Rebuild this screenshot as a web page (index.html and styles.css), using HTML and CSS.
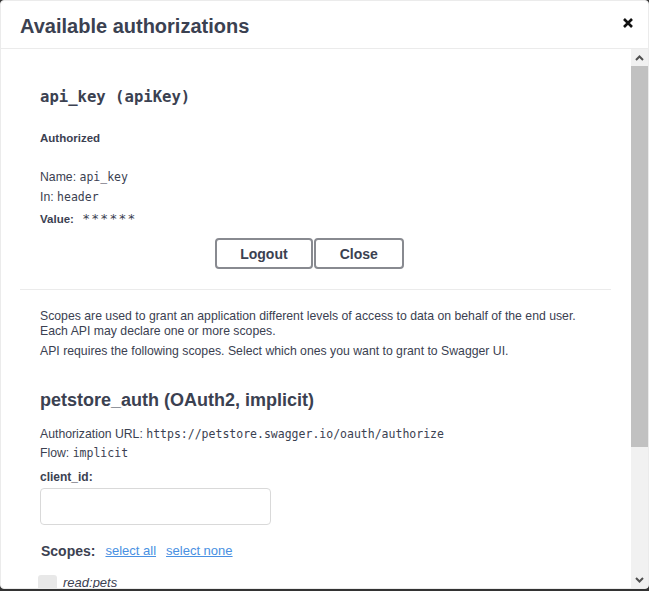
FILE: index.html
```html
<!DOCTYPE html>
<html>
<head>
<meta charset="utf-8">
<link rel="stylesheet" href="styles.css">
</head>
<body>
<div class="modal">
  <div class="modal-header">
    <h3 class="modal-title">Available authorizations</h3>
    <button class="close-btn" aria-label="Close">
      <svg width="10" height="10" viewBox="0 0 10 10"><path d="M1 1 L9 9 M9 1 L1 9" stroke="#111" stroke-width="2.6" stroke-linecap="butt"/></svg>
    </button>
  </div>
  <div class="modal-body">
    <div class="modal-content">
      <div class="auth-container first">
        <h4 class="mono-title">api_key (apiKey)</h4>
        <h6 class="status">Authorized</h6>
        <div class="row gap-top">Name: <code>api_key</code></div>
        <div class="row">In: <code>header</code></div>
        <div class="row value"><label>Value:</label> <code class="stars">******</code></div>
        <div class="btn-wrapper">
          <button class="btn logout">Logout</button>
          <button class="btn close">Close</button>
        </div>
      </div>
      <div class="auth-container second">
        <p class="desc">Scopes are used to grant an application different levels of access to data on behalf of the end user.<br>Each API may declare one or more scopes.</p>
        <p class="desc req">API requires the following scopes. Select which ones you want to grant to Swagger UI.</p>
        <h4 class="sans-title">petstore_auth (OAuth2, implicit)</h4>
        <div class="row url">Authorization URL: <code>https://petstore.swagger.io/oauth/authorize</code></div>
        <div class="row flow">Flow: <code>implicit</code></div>
        <label class="field-label">client_id:</label>
        <input class="text-input" type="text">
        <div class="scopes-row">
          <h2 class="scopes-title">Scopes:</h2>
          <a class="link" href="#">select all</a>
          <a class="link" href="#">select none</a>
        </div>
        <div class="checkbox-row">
          <span class="box"></span>
          <span class="scope-name">read:pets</span>
        </div>
      </div>
    </div>
    <div class="scrollbar">
      <div class="sb-btn">
        <svg width="9" height="6" viewBox="0 0 9 6"><path d="M1 5 L4.5 1.5 L8 5" fill="none" stroke="#505050" stroke-width="2"/></svg>
      </div>
      <div class="sb-thumb"></div>
      <div class="sb-track"></div>
      <div class="sb-btn">
        <svg width="9" height="6" viewBox="0 0 9 6"><path d="M1 1 L4.5 4.5 L8 1" fill="none" stroke="#505050" stroke-width="2"/></svg>
      </div>
    </div>
  </div>
</div>
</body>
</html>
```

FILE: styles.css
```css
html, body {
  margin: 0;
  padding: 0;
}
body {
  background: #333333;
  width: 649px;
  height: 591px;
  overflow: hidden;
  font-family: "Liberation Sans", Arial, sans-serif;
  color: #3b4151;
}
.modal {
  box-sizing: border-box;
  width: 649px;
  height: 589px;
  background: #fff;
  border: 1px solid #ebebeb;
  border-radius: 4px;
  display: flex;
  flex-direction: column;
  overflow: hidden;
}
.modal-header {
  display: flex;
  align-items: center;
  height: 47px;
  border-bottom: 1px solid #ebebeb;
  flex: none;
}
.modal-title {
  flex: 1;
  margin: 0;
  padding: 0 19px;
  font-family: "Liberation Sans", Arial, sans-serif;
  font-size: 20px;
  font-weight: 700;
  color: #3b4151;
  line-height: 24px;
  position: relative;
  top: 1px;
}
.close-btn {
  border: 0;
  background: none;
  padding: 0;
  margin: 0 15px 0 0;
  width: 10px;
  height: 10px;
  display: flex;
  position: relative;
  top: -2px;
}
.modal-body {
  flex: 1;
  display: flex;
  min-height: 0;
}
.modal-content {
  flex: 1;
  overflow: hidden;
  padding: 20px 20px 0 19px;
}
.auth-container {
  padding: 10px 20px;
  border-bottom: 1px solid #ebebeb;
  margin: 0 0 10px;
}
.auth-container.first {
  padding-bottom: 20px;
}
.auth-container.second {
  border-bottom: 0;
  padding-top: 9px;
}
.mono-title {
  margin: 6px 0 0;
  font-family: "DejaVu Sans Mono", "Liberation Mono", monospace;
  font-size: 15.6px;
  font-weight: 700;
  line-height: 24px;
  color: #3b4151;
}
.status {
  margin: 21px 0 0;
  font-size: 11.5px;
  font-weight: 700;
  line-height: 16px;
}
.row {
  font-size: 12.25px;
  line-height: 20px;
}
.gap-top {
  margin-top: 21px;
}
code {
  font-family: "DejaVu Sans Mono", "Liberation Mono", monospace;
  font-size: 11.5px;
}
.row.value {
  margin-top: 2px;
}
.row.value label {
  font-weight: 700;
  font-size: 11.5px;
}
.stars {
  font-size: 13px;
  letter-spacing: 1.2px;
  margin-left: 5px;
}
.btn-wrapper {
  display: flex;
  justify-content: center;
  gap: 1px;
  margin-top: 9px;
  padding-right: 12px;
}
.btn {
  box-sizing: border-box;
  height: 31px;
  padding: 0 23px;
  border: 2px solid #888a90;
  border-radius: 4px;
  background: #fff;
  font-family: "Liberation Sans", Arial, sans-serif;
  font-size: 14px;
  font-weight: 700;
  color: #3b4151;
}
.btn.close {
  padding: 0 24px;
}
.desc {
  margin: 0;
  font-size: 12.25px;
  line-height: 15px;
}
.desc.req {
  margin-top: 5px;
}
.sans-title {
  margin: 29px 0 0;
  font-size: 18px;
  font-weight: 700;
  line-height: 24px;
}
.row.url {
  margin-top: 13px;
  line-height: 19px;
}
.row.flow {
  line-height: 19px;
}
.field-label {
  display: block;
  margin-top: 5px;
  font-size: 12px;
  font-weight: 700;
  line-height: 18px;
}
.text-input {
  display: block;
  box-sizing: border-box;
  width: 231px;
  height: 37px;
  margin: 2px 0 0;
  border: 1px solid #d9d9d9;
  border-radius: 4px;
  background: #fff;
  padding: 8px 10px;
}
.scopes-row {
  display: flex;
  align-items: center;
  gap: 10px;
  margin-top: 16px;
  height: 20px;
  padding-left: 1px;
}
.scopes-title {
  margin: 0;
  font-size: 14px;
  font-weight: 700;
  line-height: 20px;
}
.link {
  color: #4990e2;
  font-size: 13px;
  line-height: 20px;
  text-decoration: underline;
}
.checkbox-row {
  display: flex;
  align-items: center;
  gap: 6px;
  margin-top: 14px;
  margin-left: -2px;
}
.box {
  width: 19px;
  height: 16px;
  background: #e8e8e8;
  border-radius: 3px;
}
.scope-name {
  font-size: 13px;
  font-style: italic;
  color: #3b4151;
  line-height: 16px;
}
.scrollbar {
  width: 17px;
  flex: none;
  display: flex;
  flex-direction: column;
  background: #f1f1f1;
}
.sb-btn {
  height: 17px;
  display: flex;
  align-items: center;
  justify-content: center;
  flex: none;
}
.sb-thumb {
  height: 381px;
  background: #c1c1c1;
  flex: none;
}
.sb-track {
  flex: 1;
}
```
